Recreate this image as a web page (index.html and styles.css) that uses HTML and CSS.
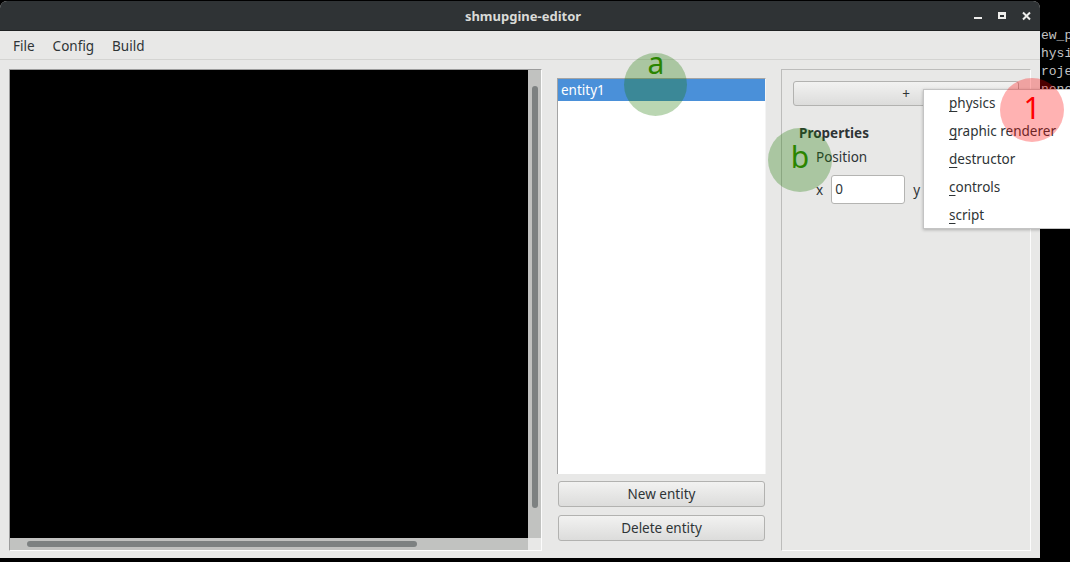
FILE: index.html
```html
<!DOCTYPE html>
<html>
<head>
<meta charset="utf-8">
<link rel="stylesheet" href="styles.css">
</head>
<body>
<div class="desktop">
  <div class="window">
    <div class="titlebar">
      <span></span>
      <span class="title">shmupgine-editor</span>
      <div class="controls">
        <svg width="8" height="10" viewBox="0 0 8 10"><rect x="0" y="6" width="8" height="2" fill="#eeeeec"/></svg>
        <svg width="8" height="10" viewBox="0 0 8 10"><path d="M0 1h8v7H0z M2 4v2h4V4z" fill="#eeeeec" fill-rule="evenodd"/></svg>
        <svg width="9" height="10" viewBox="0 0 9 10"><path d="M1 1.5l7 7M8 1.5l-7 7" stroke="#eeeeec" stroke-width="2"/></svg>
      </div>
    </div>
    <div class="menubar">
      <span class="menu-item">File</span>
      <span class="menu-item">Config</span>
      <span class="menu-item">Build</span>
    </div>
    <div class="main">
      <div class="canvas-frame">
        <div class="canvas-row">
          <div class="canvas"></div>
          <div class="vscroll"><div class="vthumb"></div></div>
        </div>
        <div class="hrow">
          <div class="hscroll"><div class="hthumb"></div></div>
          <div class="corner"></div>
        </div>
      </div>
      <div class="splitter"></div>
      <div class="entities">
        <div class="list">
          <div class="row selected">entity1</div>
        </div>
        <button class="btn">New entity</button>
        <button class="btn">Delete entity</button>
      </div>
      <div class="splitter"></div>
      <div class="group">
        <button class="btn plus">+</button>
        <div class="props-title">Properties</div>
        <div class="pos-title">Position</div>
        <div class="xy">
          <span class="lbl">x</span>
          <div class="input">0</div>
          <span class="lbl">y</span>
        </div>
      </div>
    </div>
  </div>
  <div class="term">
    <div>ew_p</div>
    <div>hysi</div>
    <div>roje</div>
    <div>nene</div>
  </div>

  <div class="popup">
    <div class="pitem"><u>p</u>hysics</div>
    <div class="pitem"><u>g</u>raphic renderer</div>
    <div class="pitem"><u>d</u>estructor</div>
    <div class="pitem"><u>c</u>ontrols</div>
    <div class="pitem"><u>s</u>cript</div>
  </div>

  <div class="circle green circle-a"></div>
  <span class="mark mark-a">a</span>
  <div class="circle green circle-b"></div>
  <span class="mark mark-b">b</span>
  <div class="circle red circle-1"></div>
  <span class="mark mark-1">1</span>
</div>
</body>
</html>
```

FILE: styles.css
```css
html, body {
  margin: 0;
  padding: 0;
  background: #000;
  width: 1070px;
  height: 562px;
  overflow: hidden;
  font-family: "Noto Sans", "DejaVu Sans", sans-serif;
  font-size: 13.5px;
  color: #2e3436;
}

.desktop {
  position: relative;
  display: flex;
  align-items: flex-start;
  width: 1070px;
  height: 562px;
}

.window {
  flex: none;
  width: 1040px;
  height: 557px;
  margin-top: 1px;
  background: #e8e8e7;
  border-radius: 7px 7px 0 0;
  display: flex;
  flex-direction: column;
  overflow: hidden;
}

.titlebar {
  box-sizing: border-box;
  height: 30px;
  background: #2f3335;
  border-bottom: 1px solid #1e2122;
  display: grid;
  grid-template-columns: 1fr auto 1fr;
  align-items: center;
}

.title {
  color: #dadbd8;
  font-weight: bold;
  font-size: 13px;
  padding-left: 6px;
}

.controls {
  justify-self: end;
  display: flex;
  gap: 16px;
  align-items: center;
  padding-right: 9px;
}

.controls svg { display: block; }

.menubar {
  box-sizing: border-box;
  height: 29px;
  border-bottom: 1px solid #d4d4d2;
  display: flex;
  align-items: center;
  padding: 2px 0 0 4px;
}

.menu-item {
  padding: 0 9px 0 9px;
  line-height: 26px;
}

.main {
  flex: 1;
  display: flex;
  padding: 9px 9px 0 9px;
  align-items: flex-start;
}

.canvas-frame {
  flex: none;
  box-sizing: border-box;
  width: 533px;
  height: 482px;
  border-top: 1px solid #9c9c9c;
  border-left: 1px solid #9c9c9c;
  border-right: 1px solid #fcfcfc;
  border-bottom: 1px solid #fcfcfc;
  display: flex;
  flex-direction: column;
}

.canvas-row {
  height: 468px;
  display: flex;
}

.canvas {
  flex: 1;
  background: #000;
}

.vscroll {
  width: 13px;
  background: #c1c2c0;
  padding: 16px 0 0 4px;
  box-sizing: border-box;
}

.vthumb {
  width: 6px;
  height: 422px;
  background: #7d8181;
  border-radius: 3px;
}

.hrow {
  height: 12px;
  display: flex;
}

.hscroll {
  flex: 1;
  background: #c1c2c0;
  padding: 3px 0 0 17px;
  box-sizing: border-box;
}

.hthumb {
  width: 390px;
  height: 6px;
  background: #7d8181;
  border-radius: 3px;
}

.corner {
  width: 13px;
  background: #e8e8e7;
}

.splitter {
  flex: none;
  width: 5px;
  height: 482px;
  background-image: radial-gradient(circle, #ffffff 45%, transparent 50%);
  background-size: 2px 2px;
  background-position: 0 0;
}

.entities {
  flex: none;
  width: 209px;
  padding: 9px 10px 0 10px;
  display: flex;
  flex-direction: column;
}

.list {
  box-sizing: border-box;
  height: 396px;
  background: #fff;
  border-top: 1px solid #a4a4a4;
  border-left: 1px solid #a4a4a4;
  border-right: 1px solid #f4f4f4;
}

.row {
  height: 22px;
  line-height: 22px;
  padding-left: 3px;
}

.row.selected {
  background: #4a90d9;
  color: #fff;
}

.btn {
  box-sizing: border-box;
  height: 26px;
  margin: 7px 1px 0 1px;
  font-family: "Noto Sans", "DejaVu Sans", sans-serif;
  font-size: 13.5px;
  color: #2e3436;
  background: linear-gradient(#f2f2f1, #dcdcdb);
  border: 1px solid #b2b2b0;
  border-radius: 3px;
  padding: 0;
}

.btn + .btn { margin-top: 8px; }

.group {
  flex: none;
  box-sizing: border-box;
  width: 250px;
  height: 482px;
  border-top: 1px solid #bcbcbb;
  border-left: 1px solid #bcbcbb;
  border-right: 1px solid #fcfcfc;
  border-bottom: 1px solid #fcfcfc;
  padding: 11px 11px 0 11px;
  display: flex;
  flex-direction: column;
}

.btn.plus {
  margin: 0;
  height: 25px;
  width: 226px;
}

.props-title {
  font-weight: bold;
  line-height: 20px;
  margin-top: 17px;
  padding-left: 6px;
}

.pos-title {
  line-height: 20px;
  margin-top: 4px;
  padding-left: 23px;
}

.xy {
  display: flex;
  align-items: center;
  margin-top: 8px;
  padding-left: 23px;
  gap: 8px;
}

.input {
  box-sizing: border-box;
  width: 74px;
  height: 29px;
  background: #fff;
  border: 1px solid #b4b4b2;
  border-radius: 3px;
  line-height: 27px;
  padding-left: 3px;
}

.term {
  flex: none;
  width: 30px;
  overflow: hidden;
  padding-top: 27px;
  padding-left: 1px;
  font-family: "Liberation Mono", monospace;
  font-size: 13px;
  line-height: 18px;
  color: #c4c4c4;
  white-space: nowrap;
}

.popup {
  position: absolute;
  left: 923px;
  top: 89px;
  width: 170px;
  height: 140px;
  box-sizing: border-box;
  background: #fff;
  border: 1px solid #c4c4c4;
  box-shadow: 0 1px 3px rgba(0, 0, 0, 0.25);
}

.pitem {
  height: 28px;
  line-height: 26px;
  padding-left: 25px;
  white-space: nowrap;
}

.pitem u {
  text-decoration: underline;
  text-underline-offset: 3px;
}

.circle {
  position: absolute;
  border-radius: 50%;
}

.green { background: rgba(25, 120, 0, 0.3); }
.red { background: rgba(255, 0, 0, 0.3); }

.circle-a { left: 624px; top: 53px; width: 63px; height: 63px; }
.circle-b { left: 768px; top: 128px; width: 64px; height: 64px; }
.circle-1 { left: 1000px; top: 78px; width: 64px; height: 64px; }

.mark {
  position: absolute;
  width: 40px;
  text-align: center;
  font-size: 30px;
  line-height: 30px;
}

.mark-a { left: 636px; top: 48px; color: #2a8500; }
.mark-b { left: 780px; top: 142px; color: #2a8500; }
.mark-1 { left: 1012px; top: 93px; color: #ff0000; }
```
